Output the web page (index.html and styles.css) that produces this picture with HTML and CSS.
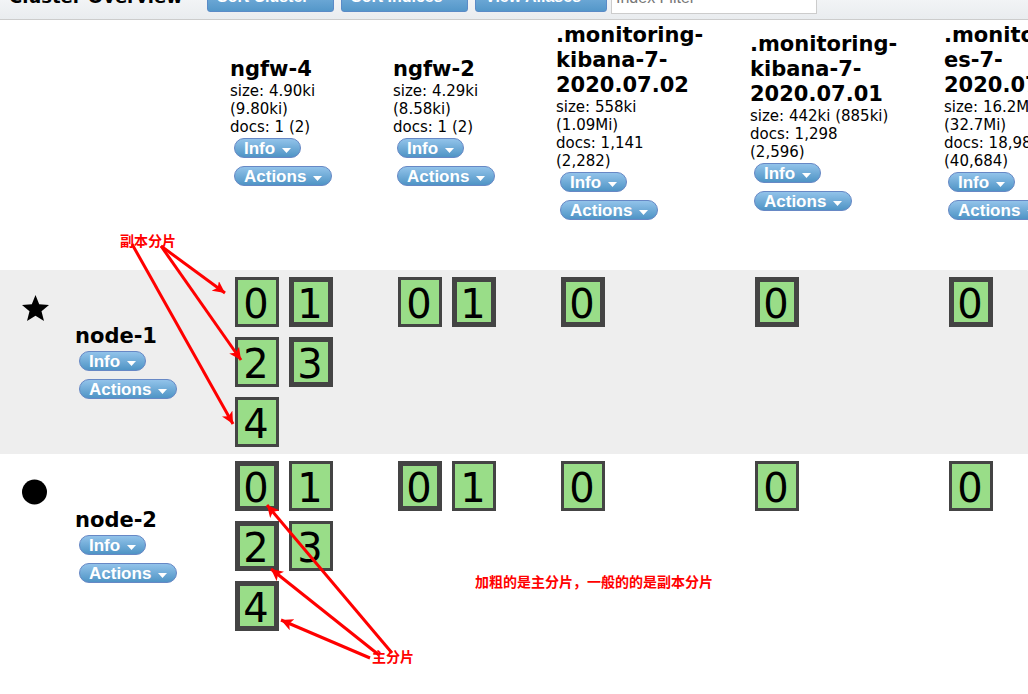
FILE: index.html
```html
<!DOCTYPE html>
<html lang="en">
<head>
<meta charset="utf-8">
<title>Cluster Overview</title>
<link rel="stylesheet" href="styles.css">
</head>
<body>
<svg class="defs" aria-hidden="true"><symbol id="caret" viewBox="0 0 9 5"><path d="M0 0H9L4.500 5Z" fill="currentColor"/></symbol></svg>
<header class="toolbar">
  <h1 class="toolbar-title">Cluster Overview</h1>
  <button class="tool">Sort Cluster <svg class="caret"><use href="#caret"/></svg></button>
  <button class="tool">Sort Indices <svg class="caret"><use href="#caret"/></svg></button>
  <button class="tool tool-last">View Aliases <svg class="caret"><use href="#caret"/></svg></button>
  <input class="filter" type="text" placeholder="Index Filter" aria-label="Index Filter">
</header>
<main class="overview">
<table class="cluster">
  <colgroup><col class="col-icon"><col class="col-node"><col class="col-small"><col class="col-small"><col class="col-wide"><col class="col-wide"><col class="col-wide"></colgroup>
  <thead>
    <tr>
      <td colspan="2"></td>
      <th scope="col"><div class="name">ngfw-4</div><div class="stats">size: 4.90ki<br>(9.80ki)<br>docs: 1 (2)</div><div class="menus"><button class="pill">Info <svg class="caret"><use href="#caret"/></svg></button><button class="pill">Actions <svg class="caret"><use href="#caret"/></svg></button></div></th>
      <th scope="col"><div class="name">ngfw-2</div><div class="stats">size: 4.29ki<br>(8.58ki)<br>docs: 1 (2)</div><div class="menus"><button class="pill">Info <svg class="caret"><use href="#caret"/></svg></button><button class="pill">Actions <svg class="caret"><use href="#caret"/></svg></button></div></th>
      <th scope="col"><div class="name">.monitoring-<br>kibana-7-<br>2020.07.02</div><div class="stats">size: 558ki<br>(1.09Mi)<br>docs: 1,141<br>(2,282)</div><div class="menus"><button class="pill">Info <svg class="caret"><use href="#caret"/></svg></button><button class="pill">Actions <svg class="caret"><use href="#caret"/></svg></button></div></th>
      <th scope="col"><div class="name">.monitoring-<br>kibana-7-<br>2020.07.01</div><div class="stats">size: 442ki (885ki)<br>docs: 1,298<br>(2,596)</div><div class="menus"><button class="pill">Info <svg class="caret"><use href="#caret"/></svg></button><button class="pill">Actions <svg class="caret"><use href="#caret"/></svg></button></div></th>
      <th scope="col"><div class="name">.monitoring-<br>es-7-<br>2020.07.02</div><div class="stats">size: 16.2Mi<br>(32.7Mi)<br>docs: 18,984<br>(40,684)</div><div class="menus"><button class="pill">Info <svg class="caret"><use href="#caret"/></svg></button><button class="pill">Actions <svg class="caret"><use href="#caret"/></svg></button></div></th>
    </tr>
  </thead>
  <tbody>
    <tr>
      <td class="mark"><svg width="28" height="27" viewBox="0 0 28 27" role="img" aria-label="Master node"><path d="M13.500 0L17.200 9.300L27 10L19.500 16.300L22 26L13.500 20.800L5 26L7.500 16.300L0 10L9.800 9.300Z"/></svg></td>
      <th scope="row"><div class="name">node-1</div><div class="menus"><button class="pill">Info <svg class="caret"><use href="#caret"/></svg></button><button class="pill">Actions <svg class="caret"><use href="#caret"/></svg></button></div></th>
      <td class="shards"><div class="grid"><span class="shard">0</span><span class="shard primary">1</span><span class="shard">2</span><span class="shard primary">3</span><span class="shard">4</span></div></td>
      <td class="shards"><div class="grid"><span class="shard">0</span><span class="shard primary">1</span></div></td>
      <td class="shards"><div class="grid"><span class="shard primary">0</span></div></td>
      <td class="shards"><div class="grid"><span class="shard primary">0</span></div></td>
      <td class="shards"><div class="grid"><span class="shard primary">0</span></div></td>
    </tr>
    <tr>
      <td class="mark"><svg width="28" height="27" viewBox="0 0 28 27" role="img" aria-label="Data node"><circle cx="12.500" cy="13" r="12.500"/></svg></td>
      <th scope="row"><div class="name">node-2</div><div class="menus"><button class="pill">Info <svg class="caret"><use href="#caret"/></svg></button><button class="pill">Actions <svg class="caret"><use href="#caret"/></svg></button></div></th>
      <td class="shards"><div class="grid"><span class="shard primary">0</span><span class="shard">1</span><span class="shard primary">2</span><span class="shard">3</span><span class="shard primary">4</span></div></td>
      <td class="shards"><div class="grid"><span class="shard primary">0</span><span class="shard">1</span></div></td>
      <td class="shards"><div class="grid"><span class="shard">0</span></div></td>
      <td class="shards"><div class="grid"><span class="shard">0</span></div></td>
      <td class="shards"><div class="grid"><span class="shard">0</span></div></td>
    </tr>
  </tbody>
</table>
</main>
<svg class="arrows" width="460" height="694" viewBox="0 0 460 694" aria-hidden="true">
  <defs><marker id="head" markerUnits="userSpaceOnUse" markerWidth="13" markerHeight="12" refX="12" refY="6" orient="auto"><path d="M0 0L12 6L0 12L3 6Z" fill="#f00"/></marker></defs>
  <g stroke="#f00" stroke-width="3">
    <path d="M161 246L225 293" marker-end="url(#head)"/>
    <path d="M161 246L241 360" marker-end="url(#head)"/>
    <path d="M132 244L233 424" marker-end="url(#head)"/>
    <path d="M392 653L267 505" marker-end="url(#head)"/>
    <path d="M379 655L271 569" marker-end="url(#head)"/>
    <path d="M370 658L281 620" marker-end="url(#head)"/>
  </g>
</svg>
<span class="note note-replica" lang="zh">副本分片</span>
<span class="note note-primary" lang="zh">主分片</span>
<span class="note note-legend" lang="zh">加粗的是主分片，一般的的是副本分片</span>
</body>
</html>
```
FILE: styles.css
```css
* { box-sizing: border-box; }
body {
  position: relative;
  display: flow-root;
  min-height: 100vh;
  margin: 0;
  overflow: hidden;
  background: #fff;
  color: #000;
  font-family: Verdana, "DejaVu Sans", sans-serif;
  font-size: 15px;
}
button, input { margin: 0; font-family: Arial, "Liberation Sans", sans-serif; font-size: 17px; }
.defs { display: none; }
.caret { width: 9px; height: 5px; flex: none; margin-top: 3px; }

/* The bar is scrolled partly past the top edge */
.toolbar {
  display: flex;
  align-items: center;
  height: 48px;
  margin-top: -28px;
  padding-left: 9px;
  border-bottom: 1px solid #ccc;
  background: linear-gradient(#fff, #e9ecef);
}
.toolbar-title { width: 198px; margin: 0; padding-top: 3px; font-size: 18px; line-height: 26px; white-space: nowrap; }
.tool {
  display: flex;
  align-items: center;
  justify-content: space-between;
  width: 127px;
  height: 32px;
  margin-right: 7px;
  padding: 3px 7px 0 9px;
  border: 1px solid #5b8bc7;
  border-radius: 3px;
  background: linear-gradient(#8fc0e8, #5497c9);
  color: #fff;
  font-size: 16px;
  font-weight: bold;
  white-space: nowrap;
}
.tool .caret { margin-top: 0; }
.tool-last { width: 132px; margin-right: 4px; }
.filter { width: 206px; height: 36px; padding: 4px 4px 0; border: 1px solid #ccc; background: #fff; font-size: 16px; }
.filter::placeholder { color: #777; }

.overview { overflow: hidden; }
.cluster { width: 1138px; table-layout: fixed; border-collapse: collapse; }
.col-icon { width: 75px; }
.col-node { width: 155px; }
.col-small { width: 163px; }
.col-wide { width: 194px; }
td, th { padding: 0; text-align: left; font-weight: normal; }
thead th { padding: 3px 0 45px; }
tbody th { padding-top: 4px; }
tbody tr:nth-child(odd) { background: #eee; }
.name { font-size: 21px; font-weight: bold; line-height: 25px; }
.stats { line-height: 18px; }
.menus { display: flex; flex-direction: column; align-items: flex-start; gap: 8px; margin: 2px 4px 5px; }
.pill {
  display: flex;
  align-items: center;
  gap: 7px;
  height: 20px;
  padding: 1px 9px 0;
  border: 1px solid #6788c5;
  border-radius: 10px;
  background: linear-gradient(#92c3ea, #4f94c5);
  color: #fff;
  font-weight: bold;
  line-height: 18px;
}
.mark { padding: 25px 0 0 22px; vertical-align: top; }
.mark svg { display: block; }
.shards { padding: 2px 0; vertical-align: top; }
.grid { display: grid; grid-template-columns: 44px 44px; gap: 10px; padding: 5px; }
.shard {
  display: flex;
  align-items: center;
  justify-content: center;
  height: 50px;
  padding: 3px 2px 0 0;
  border: 3px solid #444;
  background: #9d8;
  font-size: 40px;
  line-height: 40px;
}
.primary { border-width: 5px; }

.arrows { position: absolute; top: 0; left: 0; fill: none; pointer-events: none; }
.note {
  position: absolute;
  color: #f00;
  font-family: "Noto Sans CJK SC", sans-serif;
  font-size: 14px;
  font-weight: bold;
  line-height: 20px;
  white-space: nowrap;
}
.note-replica { left: 120px; top: 230px; }
.note-primary { left: 372px; top: 646px; }
.note-legend { left: 475px; top: 571px; }
```
